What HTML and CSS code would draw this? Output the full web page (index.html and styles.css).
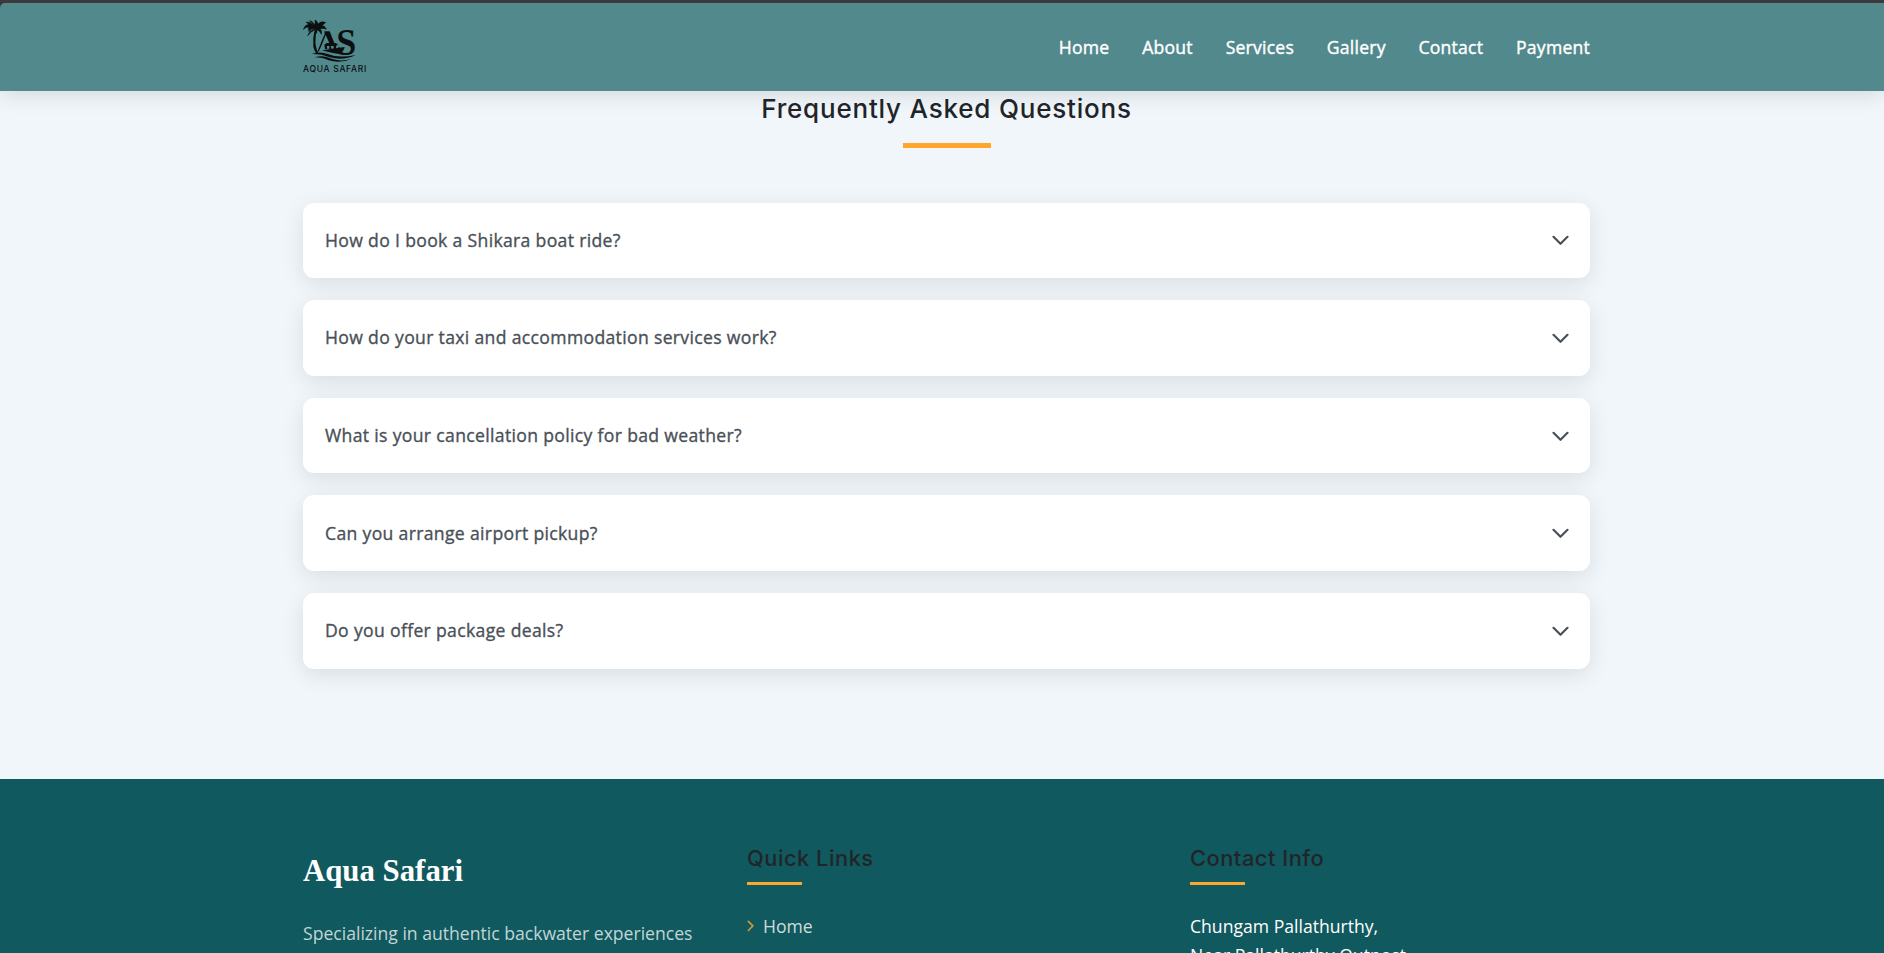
FILE: index.html
```html
<!DOCTYPE html>
<html lang="en">
<head>
<meta charset="utf-8">
<title>Aqua Safari</title>
<link rel="stylesheet" href="styles.css">
</head>
<body>
<div class="page">
  <header class="header">
    <div class="container bar">
      <svg class="logo" viewBox="39 54 189 168" role="img" aria-label="Aqua Safari">
        <g fill="#0b0f10">
          <path d="M76 87C70 72 60 64 48 67Q53 70 56 73Q45 74 40 88Q48 80 56 82Q54 88 57 95Q63 84 74 87Q58 91 53 107Q65 93 77 88Q78 96 73 105Q84 99 80 89Q90 92 94 103Q97 92 90 86Q102 84 109 88Q106 79 97 76Q103 72 107 67Q93 61 84 72Q83 63 75 60Q76 69 74 75Q67 62 59 62Q70 71 76 87Z" stroke="#0b0f10" stroke-width="1.5"/>
          <path d="M74 90Q67 116 70 140Q73 154 80 162L85 160Q74 138 77 112Q77 100 80 90Z"/>
          <path d="M103 94H119L133 129H118L107 105Q97 132 87 153L81 158Q94 125 104 102Z"/>
          <path fill-rule="evenodd" d="M103 134L110 129H138L145 136H139L138 147H105ZM111 138V146H118V138ZM123 138V146H131V138Z"/>
          <path d="M96 151L164 141Q161 156 148 162Q116 158 96 151Z"/>
          <path d="M63 162Q91 153 113 162Q147 176 197 165Q160 183 119 172Q91 160 63 162Z"/>
          <path d="M74 172Q99 164 120 175Q151 187 185 176Q151 192 116 181Q98 172 74 172Z"/>
        </g>
        <text class="logo-mark" x="139" y="166" textLength="60" lengthAdjust="spacingAndGlyphs">S</text>
        <text class="logo-name" x="39" y="216" textLength="190">AQUA SAFARI</text>
      </svg>
      <nav class="nav">
        <a>Home</a><a>About</a><a>Services</a><a>Gallery</a><a>Contact</a><a>Payment</a>
      </nav>
    </div>
  </header>
  <main class="faq">
    <div class="container">
      <h2 class="faq-title">Frequently Asked Questions</h2>
      <div class="faq-list">
        <div class="item"><span>How do I book a Shikara boat ride?</span><svg class="chevron" viewBox="0 0 17 11"><path d="M1.5 1.8L8.5 8.8L15.5 1.8"/></svg></div>
        <div class="item"><span>How do your taxi and accommodation services work?</span><svg class="chevron" viewBox="0 0 17 11"><path d="M1.5 1.8L8.5 8.8L15.5 1.8"/></svg></div>
        <div class="item"><span>What is your cancellation policy for bad weather?</span><svg class="chevron" viewBox="0 0 17 11"><path d="M1.5 1.8L8.5 8.8L15.5 1.8"/></svg></div>
        <div class="item"><span>Can you arrange airport pickup?</span><svg class="chevron" viewBox="0 0 17 11"><path d="M1.5 1.8L8.5 8.8L15.5 1.8"/></svg></div>
        <div class="item"><span>Do you offer package deals?</span><svg class="chevron" viewBox="0 0 17 11"><path d="M1.5 1.8L8.5 8.8L15.5 1.8"/></svg></div>
      </div>
    </div>
  </main>
  <footer class="footer">
    <div class="container columns">
      <section>
        <h3 class="brand">Aqua Safari</h3>
        <p class="about">Specializing in authentic backwater experiences</p>
      </section>
      <section>
        <h4 class="heading">Quick Links</h4>
        <a class="link"><svg class="arrow" viewBox="0 0 8 12"><path d="M1.3 1.3L5.9 5.9L1.3 10.5"/></svg><span>Home</span></a>
      </section>
      <section>
        <h4 class="heading">Contact Info</h4>
        <p class="address">Chungam Pallathurthy,<br>Near Pallathurthy Outpost,</p>
      </section>
    </div>
  </footer>
</div>
</body>
</html>
```
FILE: styles.css
```css
* { box-sizing: border-box; margin: 0; padding: 0; }
body { background: #3b3b3b; font-family: "Open Sans", "Noto Sans", sans-serif; font-size: 17.6px; overflow: hidden; }
.page { height: 953px; padding-top: 3px; overflow: hidden; display: flex; flex-direction: column; }
.container { width: 1287px; margin-left: 303px; }
.header { height: 88px; flex: none; background: #52898d; border-top-left-radius: 5px; box-shadow: 0 4px 22px rgba(0,0,0,.12); position: relative; z-index: 1; clip-path: inset(0 0 -30px 0); }
.bar { height: 88px; display: flex; justify-content: space-between; align-items: flex-start; }
.logo { width: 63px; height: 56px; margin-top: 15px; }
.logo-mark { font: bold 112px "Liberation Serif", serif; fill: #0b0f10; }
.logo-name { font: 500 25.5px Inter, sans-serif; fill: #0b0f10; }
.nav { display: flex; gap: 32.8px; padding-top: 31px; color: #fff; line-height: 26px; letter-spacing: .22px; -webkit-text-stroke: .4px #fff; }
.faq { flex: none; height: 688px; padding-top: 1px; background: #f1f6fb; }
.faq-title { font: 500 26px/34px Inter, sans-serif; letter-spacing: .8px; color: #212529; display: flex; flex-direction: column; align-items: center; gap: 17px; white-space: nowrap; }
.faq-title::after { content: ""; width: 88px; height: 5px; background: #ffa62b; }
.faq-list { margin-top: 54.7px; display: grid; gap: 22px; }
.item { height: 75.6px; border-radius: 11px; background: #fff; box-shadow: 0 5.5px 22px rgba(0,0,0,.1); padding: 0 21px 0 22px; display: flex; align-items: center; justify-content: space-between; color: #495057; letter-spacing: .33px; }
.item span { padding-bottom: 1.5px; -webkit-text-stroke: .35px #495057; }
.chevron { width: 17px; height: 11px; margin-top: 1px; fill: none; stroke: #495057; stroke-width: 2.2; stroke-linecap: round; stroke-linejoin: round; }
.footer { flex: 1 0 auto; background: #10595e; }
.columns { display: grid; grid-template-columns: 444px 443px 400px; }
.brand { font: bold 30.8px/36px "Liberation Serif", serif; color: #fff; padding-top: 74px; }
.about { color: rgba(255,255,255,.75); line-height: 28px; margin-top: 30px; white-space: nowrap; }
.heading { font: 500 21.8px/26px Inter, sans-serif; letter-spacing: .53px; color: #212529; padding-top: 66px; }
.heading::after { content: ""; display: block; width: 55px; height: 3px; margin-top: 11px; background: #ffa62b; }
.link { display: flex; align-items: center; gap: 8px; margin-top: 27px; line-height: 28px; color: rgba(255,255,255,.8); }
.arrow { width: 8px; height: 12px; fill: none; stroke: #ffa62b; stroke-opacity: .8; stroke-width: 1.7; stroke-linecap: round; stroke-linejoin: round; }
.address { color: #fff; line-height: 29px; margin-top: 27px; white-space: nowrap; }
```
